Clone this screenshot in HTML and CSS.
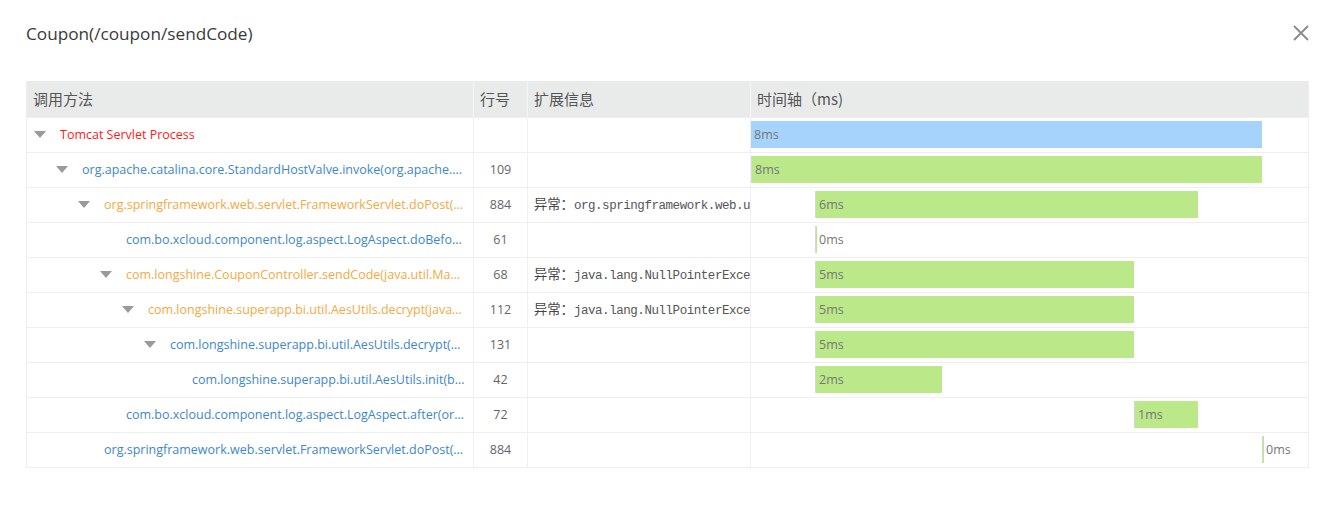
FILE: index.html
```html
<!DOCTYPE html>
<html lang="zh-CN">
<head>
<meta charset="utf-8">
<title>Coupon trace</title>
<link rel="stylesheet" href="styles.css">
</head>
<body>
<div class="dialog">
  <div class="dialog-head">
    <h1 class="dialog-title">Coupon(/coupon/sendCode)</h1>
    <button class="close" aria-label="close">
      <svg width="18" height="18" viewBox="0 0 18 18"><path d="M2 2 L16 16 M16 2 L2 16" stroke="#8a8a8a" stroke-width="1.8" fill="none"/></svg>
    </button>
  </div>
  <table class="trace">
    <colgroup>
      <col class="c-method"><col class="c-line"><col class="c-ext"><col class="c-time">
    </colgroup>
    <thead>
      <tr><th>调用方法</th><th>行号</th><th>扩展信息</th><th>时间轴（ms)</th></tr>
    </thead>
    <tbody>
      <tr>
        <td><div class="m" style="padding-left:0px"><span class="tri"></span><span class="name red">Tomcat Servlet Process</span></div></td>
        <td class="ln"></td><td class="ext"></td>
        <td class="tl"><div class="bar blue" style="margin-left:0px;width:511px"><span>8ms</span></div></td>
      </tr>
      <tr>
        <td><div class="m" style="padding-left:22px"><span class="tri"></span><span class="name blue-t">org.apache.catalina.core.StandardHostValve.invoke(org.apache.catalina.connector.Request, org.apache.catalina.connector.Response)</span></div></td>
        <td class="ln">109</td><td class="ext"></td>
        <td class="tl"><div class="bar" style="margin-left:0px;width:511px"><span>8ms</span></div></td>
      </tr>
      <tr>
        <td><div class="m" style="padding-left:44px"><span class="tri"></span><span class="name orange">org.springframework.web.servlet.FrameworkServlet.doPost(javax.servlet.http.HttpServletRequest)</span></div></td>
        <td class="ln">884</td><td class="ext"><span class="ex">异常：</span>org.springframework.web.util.NestedServletException</td>
        <td class="tl"><div class="bar" style="margin-left:64px;width:383px"><span>6ms</span></div></td>
      </tr>
      <tr>
        <td><div class="m" style="padding-left:66px"><span class="tri none"></span><span class="name blue-t">com.bo.xcloud.component.log.aspect.LogAspect.doBefore(org.aspectj.lang.JoinPoint)</span></div></td>
        <td class="ln">61</td><td class="ext"></td>
        <td class="tl"><div class="bar" style="margin-left:64px;width:0px"><span>0ms</span></div></td>
      </tr>
      <tr>
        <td><div class="m" style="padding-left:66px"><span class="tri"></span><span class="name orange">com.longshine.CouponController.sendCode(java.util.Map, javax.servlet.http.HttpServletRequest)</span></div></td>
        <td class="ln">68</td><td class="ext"><span class="ex">异常：</span>java.lang.NullPointerException</td>
        <td class="tl"><div class="bar" style="margin-left:64px;width:319px"><span>5ms</span></div></td>
      </tr>
      <tr>
        <td><div class="m" style="padding-left:88px"><span class="tri"></span><span class="name orange">com.longshine.superapp.bi.util.AesUtils.decrypt(java.lang.String, java.lang.String)</span></div></td>
        <td class="ln">112</td><td class="ext"><span class="ex">异常：</span>java.lang.NullPointerException</td>
        <td class="tl"><div class="bar" style="margin-left:64px;width:319px"><span>5ms</span></div></td>
      </tr>
      <tr>
        <td><div class="m" style="padding-left:110px"><span class="tri"></span><span class="name blue-t">com.longshine.superapp.bi.util.AesUtils.decrypt(byte[], byte[])</span></div></td>
        <td class="ln">131</td><td class="ext"></td>
        <td class="tl"><div class="bar" style="margin-left:64px;width:319px"><span>5ms</span></div></td>
      </tr>
      <tr>
        <td><div class="m" style="padding-left:132px"><span class="tri none"></span><span class="name blue-t">com.longshine.superapp.bi.util.AesUtils.init(byte[])</span></div></td>
        <td class="ln">42</td><td class="ext"></td>
        <td class="tl"><div class="bar" style="margin-left:64px;width:127px"><span>2ms</span></div></td>
      </tr>
      <tr>
        <td><div class="m" style="padding-left:66px"><span class="tri none"></span><span class="name blue-t">com.bo.xcloud.component.log.aspect.LogAspect.after(org.aspectj.lang.JoinPoint)</span></div></td>
        <td class="ln">72</td><td class="ext"></td>
        <td class="tl"><div class="bar" style="margin-left:383px;width:64px"><span>1ms</span></div></td>
      </tr>
      <tr>
        <td><div class="m" style="padding-left:44px"><span class="tri none"></span><span class="name blue-t">org.springframework.web.servlet.FrameworkServlet.doPost(javax.servlet.http.HttpServletRequest)</span></div></td>
        <td class="ln">884</td><td class="ext"></td>
        <td class="tl"><div class="bar" style="margin-left:511px;width:0px"><span>0ms</span></div></td>
      </tr>
    </tbody>
  </table>
</div>
</body>
</html>
```
FILE: styles.css
```css
* { box-sizing: border-box; }
html, body { margin: 0; padding: 0; background: #fff; }
body { font-family: "Open Sans", "Noto Sans CJK SC", sans-serif; color: #333; }

.dialog { padding: 0 29px 0 26px; }
.dialog-head {
  display: flex;
  align-items: center;
  justify-content: space-between;
  height: 66px;
}
.dialog-title {
  margin: 0;
  font-weight: 400;
  font-size: 17.2px;
  color: #3a3a3a;
}
.close {
  border: 0;
  background: none;
  padding: 0;
  margin-right: -2px;
  width: 18px;
  height: 18px;
  cursor: pointer;
}
.close svg { display: block; }

.trace {
  margin-top: 15px;
  width: 1282px;
  table-layout: fixed;
  border-collapse: collapse;
  border-left: 1px solid #eeeeee;
  border-right: 1px solid #eeeeee;
  border-bottom: 1px solid #eeeeee;
}
.c-method { width: 447px; }
.c-line { width: 54px; }
.c-ext { width: 223px; }
.c-time { width: 558px; }

.trace th {
  height: 36px;
  background: #e9ebea;
  color: #555;
  font-family: "Noto Sans CJK SC", sans-serif;
  font-weight: 400;
  font-size: 15px;
  text-align: left;
  padding: 0 6px;
  border-left: 1px solid #f5f5f5;
}
.trace th:first-child { border-left: 0; }

.trace td {
  height: 35px;
  padding: 0;
  border-top: 1px solid #efefef;
  border-left: 1px solid #efefef;
  font-size: 12.5px;
  line-height: 16px;
  white-space: nowrap;
  overflow: hidden;
}
.trace td:first-child { border-left: 0; }

.m {
  display: flex;
  align-items: center;
  padding-right: 8px;
  margin-left: 7px;
}
.tri {
  flex: 0 0 auto;
  width: 0; height: 0;
  border-left: 6px solid transparent;
  border-right: 6px solid transparent;
  border-top: 7px solid #9a9a9a;
  margin-right: 14px;
}
.tri.none { border-top-color: transparent; }
.name {
  flex: 1 1 auto;
  min-width: 0;
  overflow: hidden;
  text-overflow: ellipsis;
  white-space: nowrap;
  font-size: 12.5px;
}
.red { color: #ff1a1a; }
.blue-t { color: #3e87c8; }
.orange { color: #f4a943; }

.trace td.ln { text-align: center; color: #666; }

.trace td.ext {
  padding: 0 6px;
  font-family: "Liberation Mono", monospace;
  font-size: 12.5px;
  letter-spacing: -0.45px;
  color: #555;
  text-overflow: clip;
}
.ex {
  font-family: "Noto Sans CJK SC", sans-serif;
  font-size: 13.3px;
  letter-spacing: 0;
  color: #444;
}

.trace td.tl { padding: 3px 0; }
.bar {
  height: 27px;
  background: #bbe889;
  border-left: 1px solid #d6d9d2;
  min-width: 2px;
  display: flex;
  align-items: center;
  overflow: visible;
}
.bar.blue { background: #a6d3fc; border-left: 0; }
.bar span {
  padding-left: 3px;
  color: #777;
  font-size: 12.5px;
  white-space: nowrap;
}
```
